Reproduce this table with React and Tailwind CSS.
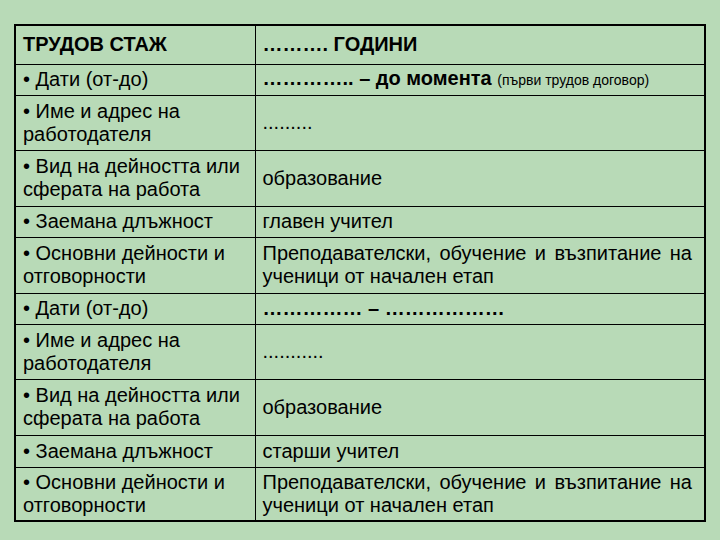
export default function App() {
  const L = "border border-black pl-[7px] pr-[10px] align-middle leading-[23px]";
  const R = "border border-black pl-[7px] pr-[12px] align-middle leading-[23px]";
  return (
    <div className="w-[720px] h-[540px] bg-[#b8dab7] pt-[24px] pl-[14px] text-black" style={{ fontFamily: '"Liberation Sans", Arial, sans-serif' }}>
      <table className="border-collapse border-2 border-black w-[692px] table-fixed text-[20px]">
        <colgroup>
          <col className="w-[240px]" />
          <col />
        </colgroup>
        <tbody>
          <tr className="h-[39px]">
            <td className={L + " font-bold"}>ТРУДОВ СТАЖ</td>
            <td className={R + " font-bold"}>………. ГОДИНИ</td>
          </tr>
          <tr className="h-[31px]">
            <td className={L}>• Дати (от-до)</td>
            <td className={R + " whitespace-nowrap"}>
              <span className="font-bold">………….. – до момента</span>{" "}
              <span className="text-[14px]">(първи трудов договор)</span>
            </td>
          </tr>
          <tr className="h-[55px]">
            <td className={L}>• Име и адрес на работодателя</td>
            <td className={R}>.........</td>
          </tr>
          <tr className="h-[56px]">
            <td className={L}>• Вид на дейността или сферата на работа</td>
            <td className={R}>образование</td>
          </tr>
          <tr className="h-[31px]">
            <td className={L}>• Заемана длъжност</td>
            <td className={R}>главен учител</td>
          </tr>
          <tr className="h-[56px]">
            <td className={L}>• Основни дейности и отговорности</td>
            <td className={R + " text-justify"}>Преподавателски, обучение и възпитание на ученици от начален етап</td>
          </tr>
          <tr className="h-[31px]">
            <td className={L}>• Дати (от-до)</td>
            <td className={R + " font-bold"}>…………… – ………………</td>
          </tr>
          <tr className="h-[55px]">
            <td className={L}>• Име и адрес на работодателя</td>
            <td className={R}>...........</td>
          </tr>
          <tr className="h-[56px]">
            <td className={L}>• Вид на дейността или сферата на работа</td>
            <td className={R}>образование</td>
          </tr>
          <tr className="h-[32px]">
            <td className={L}>• Заемана длъжност</td>
            <td className={R}>старши учител</td>
          </tr>
          <tr className="h-[54px]">
            <td className={L}>• Основни дейности и отговорности</td>
            <td className={R + " text-justify"}>Преподавателски, обучение и възпитание на ученици от начален етап</td>
          </tr>
        </tbody>
      </table>
    </div>
  );
}
